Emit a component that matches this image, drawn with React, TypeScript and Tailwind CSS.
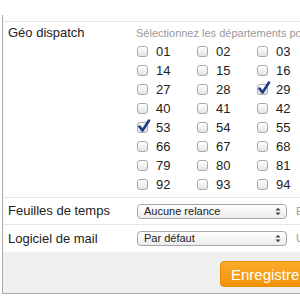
import React from 'react';

const depts = ['01', '02', '03', '14', '15', '16', '27', '28', '29', '40', '41', '42', '53', '54', '55', '66', '67', '68', '79', '80', '81', '92', '93', '94'];
const checked = ['29', '53'];

function Box({ on }: { on: boolean }) {
  return (
    <span className="relative inline-block h-[11px] w-[11px] shrink-0 rounded-[3px] border border-[#a9a9a9] bg-gradient-to-b from-white to-[#e4e4e4] shadow-[inset_0_1px_0_#fff]">
      {on ? (
        <svg className="absolute -left-[1px] -top-[4px]" width="14" height="14" viewBox="0 0 14 14">
          <path d="M2.5 7.5 L5.5 11.5 L12 1.5" fill="none" stroke="#1d3a86" strokeWidth="2.6" strokeLinecap="round" strokeLinejoin="round" />
        </svg>
      ) : null}
    </span>
  );
}

function Select({ value }: { value: string }) {
  return (
    <div className="flex h-[15px] w-[150px] shrink-0 items-center justify-between rounded-[4px] border border-[#a6a6a6] bg-gradient-to-b from-white to-[#ececec] pl-[6px] pr-[5px] text-[11px] leading-none text-[#222]">
      <span>{value}</span>
      <svg width="6" height="9" viewBox="0 0 6 9">
        <path d="M0.5 3.5 L3 0.8 L5.5 3.5 Z M0.5 5.5 L3 8.2 L5.5 5.5 Z" fill="#444" />
      </svg>
    </div>
  );
}

export default function App() {
  return (
    <div className="h-[300px] w-[300px] overflow-hidden bg-white font-['Liberation_Sans',Arial,sans-serif] text-[#222]">
      <div className="ml-[2px] mt-[15px] w-[700px] border-b border-l border-[#ababab]">
        <div className="h-[6px]" />

        <div className="flex border-t border-[#e6e6e6] pb-[3px] pt-[4px]">
          <div className="w-[133px] pl-[5px] text-[13px] leading-[14px]">Géo dispatch</div>
          <div>
            <div className="text-[11px] leading-[14px] text-[#9a9a9a]">
              Sélectionnez les départements pour lesquels vous souhaitez recevoir des missions
            </div>
            <div className="mt-[2px] grid w-[180px] grid-cols-3">
              {depts.map((d) => (
                <label key={d} className="flex h-[19px] items-center gap-[8px] pl-[1px] text-[13px]">
                  <Box on={checked.includes(d)} />
                  <span>{d}</span>
                </label>
              ))}
            </div>
          </div>
        </div>

        <div className="flex h-[27px] items-center border-t border-[#e6e6e6]">
          <div className="w-[134px] pl-[5px] text-[13px]">Feuilles de temps</div>
          <Select value="Aucune relance" />
          <span className="ml-[9px] text-[11px] text-[#999]">Envoyer une relance par e-mail</span>
        </div>

        <div className="flex h-[28px] items-center border-t border-[#e6e6e6]">
          <div className="w-[134px] pl-[5px] text-[13px]">Logiciel de mail</div>
          <Select value="Par défaut" />
          <span className="ml-[9px] text-[11px] text-[#999]">Utilisé pour ouvrir les liens mailto</span>
        </div>

        <div className="h-[41px] bg-[#f0f0f0] pl-[217px] pt-[9px]">
          <button className="h-[26px] rounded-[4px] border border-[#e58c00] bg-gradient-to-b from-[#fbab2a] to-[#f39200] px-[10px] text-[15px] leading-none text-white">
            Enregistrer
          </button>
        </div>
      </div>
    </div>
  );
}
